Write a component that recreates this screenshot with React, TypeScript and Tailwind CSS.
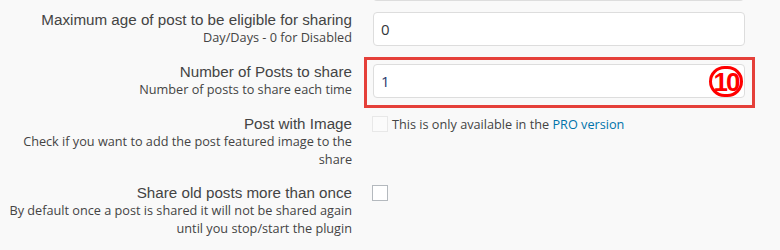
export default function App() {
  const label = "text-[15.2px] leading-[16px] text-[#444]";
  const sub = "text-[12.7px] leading-[18px] text-[#444] [font-family:'Open_Sans',sans-serif]";
  return (
    <div className="w-[780px] h-[250px] overflow-hidden bg-[#f9f9f9] [font-family:'Liberation_Sans',Arial,sans-serif]">
      <div className="relative h-0">
        <div className="absolute left-[373px] top-[-3px] w-[371px] h-[4px] rounded-b-[4px] border border-[#ddd] bg-white" />
      </div>
      <div className="flex flex-col gap-[18px] pt-[12px]">
        {/* max age */}
        <div className="flex items-start">
          <div className="w-[352px] text-right">
            <div className={label}>Maximum age of post to be eligible for sharing</div>
            <div className={sub}>Day/Days - 0 for Disabled</div>
          </div>
          <div className="ml-[21px] w-[372px]">
            <div className="h-[34px] rounded-[4px] border border-[#ddd] bg-white px-[7px] flex items-center text-[15px] text-[#32373c] [font-family:'Open_Sans',sans-serif]">
              0
            </div>
          </div>
        </div>

        {/* number of posts */}
        <div className="flex items-start">
          <div className="w-[352px] text-right">
            <div className={label}>Number of Posts to share</div>
            <div className={sub}>Number of posts to share each time</div>
          </div>
          <div className="ml-[21px] w-[372px] relative">
            <div className="h-[34px] rounded-[4px] border border-[#ddd] bg-white px-[7px] flex items-center justify-between text-[15px] text-[#2a3a6b] [font-family:'Open_Sans',sans-serif]">
              <span>1</span>
            </div>
            <div className="absolute -top-[7px] -left-[9px] -right-[10px] -bottom-[10px] border-[3px] border-[#e5403a]" />
            <div className="absolute right-[2px] top-[2px] w-[34px] h-[31px] rounded-full border-[3px] border-[#ff0000] flex items-center justify-center text-[#ff0000] font-bold text-[26px] leading-none tracking-[-2px] [font-family:'Liberation_Sans_Narrow','Liberation_Sans',sans-serif]">
              10
            </div>
          </div>
        </div>

        {/* post with image */}
        <div className="flex items-start">
          <div className="w-[352px] text-right">
            <div className={label}>Post with Image</div>
            <div className={sub}>
              Check if you want to add the post featured image to the
              <br />
              share
            </div>
          </div>
          <div className="ml-[20px] flex items-center gap-[4px]">
            <div className="w-[16px] h-[16px] border border-[#e8e8e8] bg-[#fbfbfb]" />
            <span className="text-[12.7px] leading-[16px] text-[#444] [font-family:'Open_Sans',sans-serif]">
              This is only available in the <span className="text-[#0073aa]">PRO version</span>
            </span>
          </div>
        </div>

        {/* share once */}
        <div className="flex items-start mt-[-1px]">
          <div className="w-[352px] text-right">
            <div className={label}>Share old posts more than once</div>
            <div className={sub}>
              By default once a post is shared it will not be shared again
              <br />
              until you stop/start the plugin
            </div>
          </div>
          <div className="ml-[20px]">
            <div className="w-[16px] h-[16px] border border-[#b4b9be] bg-white" />
          </div>
        </div>
      </div>
    </div>
  );
}
